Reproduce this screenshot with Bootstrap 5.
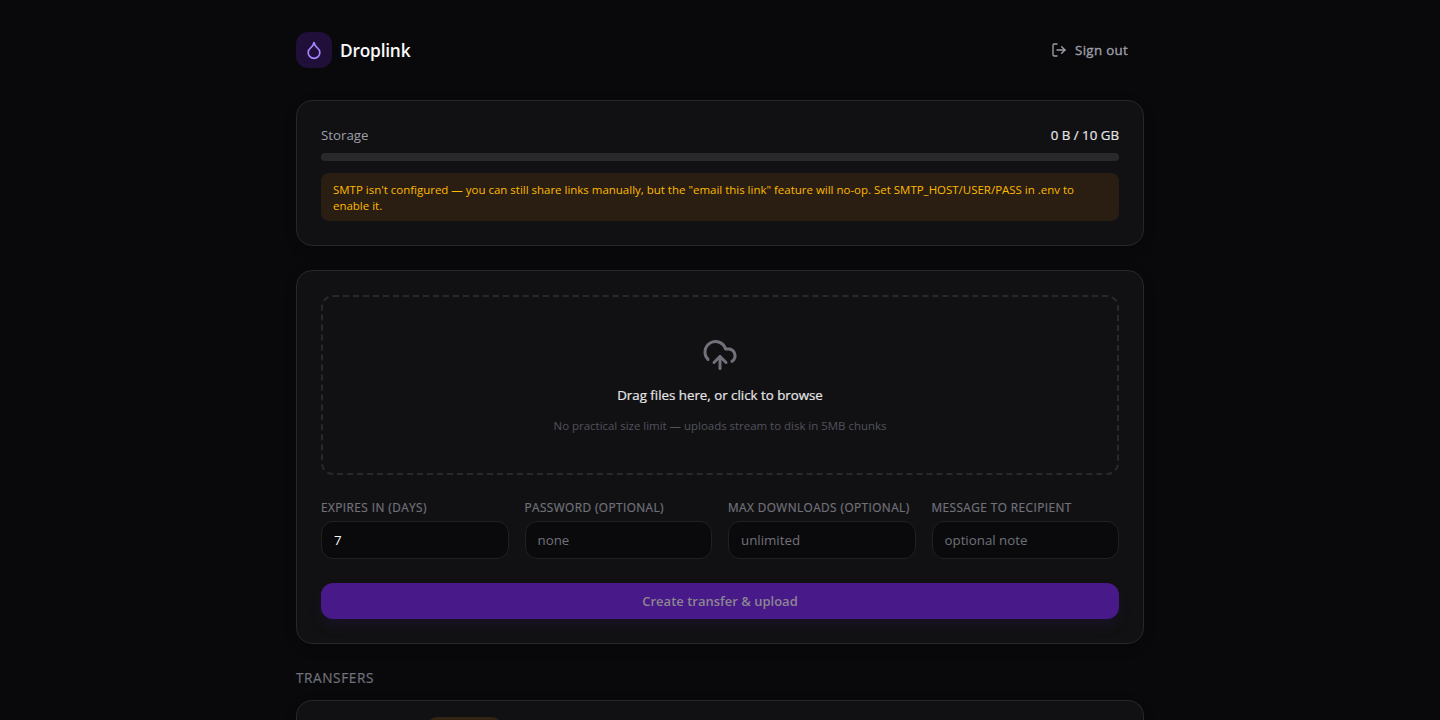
<!DOCTYPE html>
<html lang="en" data-bs-theme="dark">
<head>
<meta charset="utf-8">
<meta name="viewport" content="width=device-width, initial-scale=1">
<title>Droplink</title>
<link href="https://cdn.jsdelivr.net/npm/bootstrap@5.3.0/dist/css/bootstrap.min.css" rel="stylesheet">
<style>
  body { background: #09090b; color: #fafafa; font-family: "Open Sans", "Noto Sans", sans-serif; font-size: 13.3px; line-height: 20px; }
  .shell { width: 848px; height: 100vh; padding-top: 32px; overflow: clip; overflow-clip-margin: 20px; }
  .medium { -webkit-text-stroke: .22px currentColor; }
  .logo-tile { width: 36px; height: 36px; border-radius: 12px; background: #200f38; color: #a684ff; }
  .brand { font-size: 17.3px; line-height: 28px; font-weight: 600; letter-spacing: -.2px; padding-top: 1px; }
  .signout { color: #9f9fa9; letter-spacing: .32px; -webkit-text-stroke-width: .35px; }
  .panel { background: #111113; border: 1px solid #27272a; border-radius: 16px; box-shadow: 0 4px 12px rgba(0,0,0,.22); }
  .storage-label { color: #9f9fa9; }
  .storage-value { color: #e4e4e7; }
  .meter { height: 8px; background: #29292b; border-radius: 4px; }
  .notice { margin-top: 12px; padding: 9px 12px 7px; background: #291e11; color: #ffb900; border-radius: 8px; font-size: 11.47px; line-height: 16px; }
  .dropzone { border: 2px dashed #29292c; border-radius: 12px; padding: 40px; gap: 12px; }
  .dropzone svg { color: #71717b; }
  .drop-title { color: #e4e4e7; }
  .drop-hint { color: #52525c; font-size: 11.45px; line-height: 16px; padding-top: 1px; margin-bottom: -1px; }
  .field-label { color: #71717b; font-size: 11.8px; line-height: 16px; letter-spacing: .44px; text-transform: uppercase; white-space: nowrap; margin-bottom: 6px; }
  .field-input.form-control { height: 38px; background: #0a0a0c; border: 1px solid #212124; border-radius: 12px; color: #fafafa; font-size: 13.3px; line-height: 20px; padding: 8px 12px; }
  .field-input::placeholder { color: #71717b; }
  .submit.btn { height: 36px; border-radius: 12px; border: 0; background: #481989; color: #8c8690; font-size: 13px; line-height: 20px; font-weight: 600; box-shadow: 0 8px 15px -3px rgba(72,25,137,.18); }
  .section-title { color: #71717b; font-size: 13.6px; line-height: 20px; letter-spacing: .6px; font-weight: 400; text-transform: uppercase; margin-bottom: 12px; }
  .state-pill { width: 75px; height: 20px; margin-left: 114px; background: #332312; }
</style>
</head>
<body>
<div class="shell mx-auto">
  <header class="d-flex align-items-center justify-content-between mb-4 pb-2">
    <div class="d-flex align-items-center gap-2">
      <span class="logo-tile d-flex align-items-center justify-content-center">
        <svg width="20" height="20" viewBox="0 0 24 24" fill="none" stroke="currentColor" stroke-width="2" stroke-linecap="round" stroke-linejoin="round"><path d="M12 22a7 7 0 0 0 7-7c0-2-1-3.9-3-5.5s-3.5-4-4-6.5c-.5 2.5-2 4.9-4 6.5C6 11.1 5 13 5 15a7 7 0 0 0 7 7z"/></svg>
      </span>
      <span class="brand">Droplink</span>
    </div>
    <a class="signout medium d-flex align-items-center gap-2 px-3 text-decoration-none" href="#">
      <svg width="16" height="16" viewBox="0 0 24 24" fill="none" stroke="currentColor" stroke-width="2" stroke-linecap="round" stroke-linejoin="round"><path d="M9 21H5a2 2 0 0 1-2-2V5a2 2 0 0 1 2-2h4"/><path d="m16 17 5-5-5-5"/><path d="M21 12H9"/></svg>
      <span>Sign out</span>
    </a>
  </header>

  <section class="panel p-4 mb-4">
    <div class="d-flex justify-content-between mb-2">
      <span class="storage-label">Storage</span>
      <span class="storage-value medium">0 B / 10 GB</span>
    </div>
    <div class="meter"></div>
    <div class="notice">SMTP isn't configured — you can still share links manually, but the "email this link" feature will no-op. Set SMTP_HOST/USER/PASS in .env to enable it.</div>
  </section>

  <section class="panel p-4 mb-4">
    <div class="dropzone d-flex flex-column align-items-center text-center mb-4">
      <svg width="36" height="36" viewBox="0 0 24 24" fill="none" stroke="currentColor" stroke-width="2" stroke-linecap="round" stroke-linejoin="round"><path d="M12 13v8"/><path d="M4 14.899A7 7 0 1 1 15.71 8h1.79a4.5 4.5 0 0 1 2.5 8.242"/><path d="m8 17 4-4 4 4"/></svg>
      <span class="drop-title medium">Drag files here, or click to browse</span>
      <span class="drop-hint">No practical size limit — uploads stream to disk in 5MB chunks</span>
    </div>
    <div class="row gx-3 mb-4">
      <div class="col-3"><label class="field-label medium d-block" for="days">Expires in (days)</label><input id="days" class="field-input form-control" value="7"></div>
      <div class="col-3"><label class="field-label medium d-block" for="pass">Password (optional)</label><input id="pass" class="field-input form-control" placeholder="none"></div>
      <div class="col-3"><label class="field-label medium d-block" for="max">Max downloads (optional)</label><input id="max" class="field-input form-control" placeholder="unlimited"></div>
      <div class="col-3"><label class="field-label medium d-block" for="note">Message to recipient</label><input id="note" class="field-input form-control" placeholder="optional note"></div>
    </div>
    <button class="submit btn w-100" type="button">Create transfer &amp; upload</button>
  </section>

  <h2 class="section-title medium">Transfers</h2>
  <section class="panel border-bottom-0 rounded-bottom-0 p-3 pb-0 overflow-hidden" style="height:20px"><div class="state-pill rounded-pill"></div></section>
</div>
</body>
</html>
